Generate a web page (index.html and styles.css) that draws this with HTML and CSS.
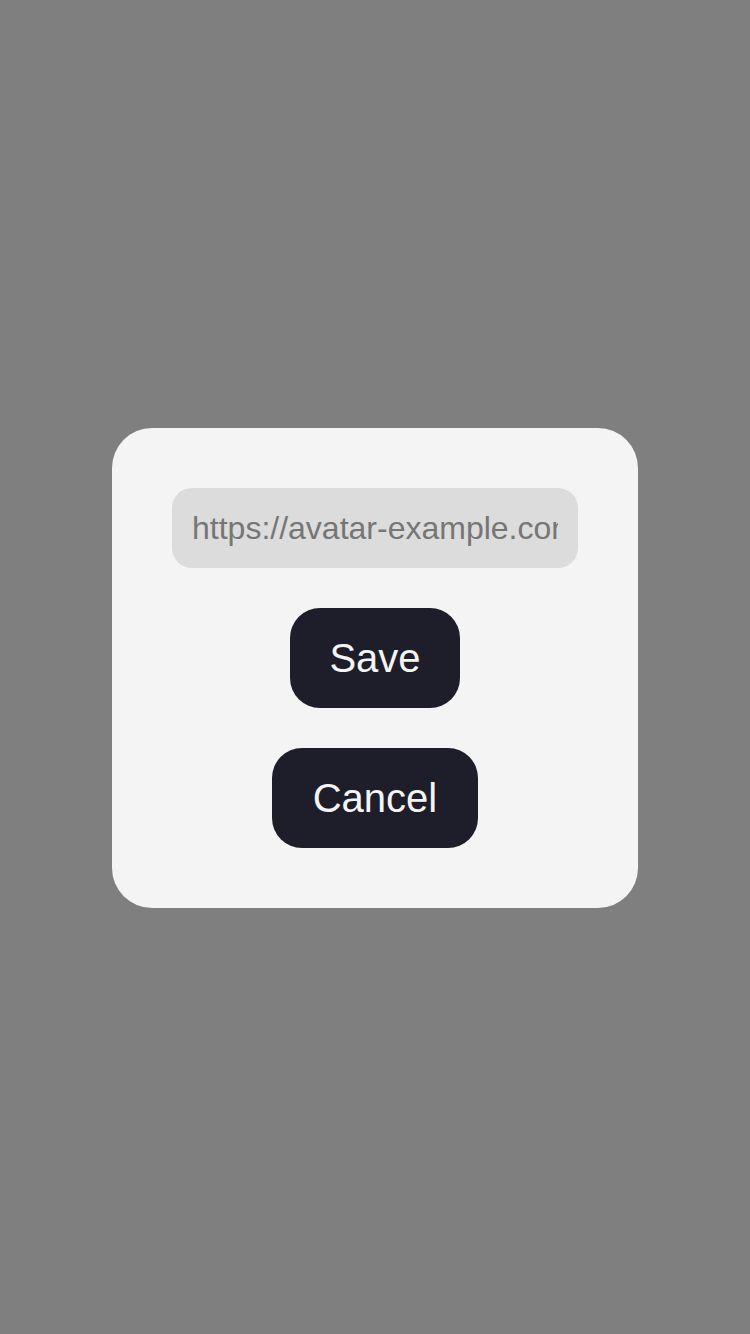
FILE: index.html
```html
<!DOCTYPE html>
<html>
<head>
<meta charset="utf-8">
<link rel="stylesheet" href="styles.css">
</head>
<body>
<div class="overlay">
  <div class="modal">
    <input class="url-input" type="text" placeholder="https://avatar-example.com/me.png">
    <button class="btn btn-save">Save</button>
    <button class="btn btn-cancel">Cancel</button>
  </div>
</div>
</body>
</html>
```
FILE: styles.css
```css
html, body {
  margin: 0;
  padding: 0;
  height: 100%;
}
body {
  background: #7f7f7f;
  font-family: "Liberation Sans", Arial, sans-serif;
}
.overlay {
  height: 1334px;
  box-sizing: border-box;
  padding-top: 2px;
  display: flex;
  align-items: center;
  justify-content: center;
}
.modal {
  width: 526px;
  box-sizing: border-box;
  padding: 60px;
  background: #f4f4f4;
  border-radius: 40px;
  display: flex;
  flex-direction: column;
  align-items: center;
  gap: 40px;
}
.url-input {
  width: 406px;
  height: 80px;
  box-sizing: border-box;
  padding: 0 20px;
  border: none;
  outline: none;
  border-radius: 20px;
  background: #dcdcdc;
  font-family: "Liberation Sans", Arial, sans-serif;
  font-size: 32px;
  color: #222;
}
.url-input::placeholder {
  color: #767676;
  opacity: 1;
}
.btn {
  height: 100px;
  padding: 0;
  border: none;
  border-radius: 30px;
  background: #1e1e2a;
  color: #f4f4f4;
  font-family: "Liberation Sans", Arial, sans-serif;
  font-size: 40px;
  line-height: 40px;
  text-align: center;
}
.btn-save {
  width: 170px;
}
.btn-cancel {
  width: 206px;
}
```
